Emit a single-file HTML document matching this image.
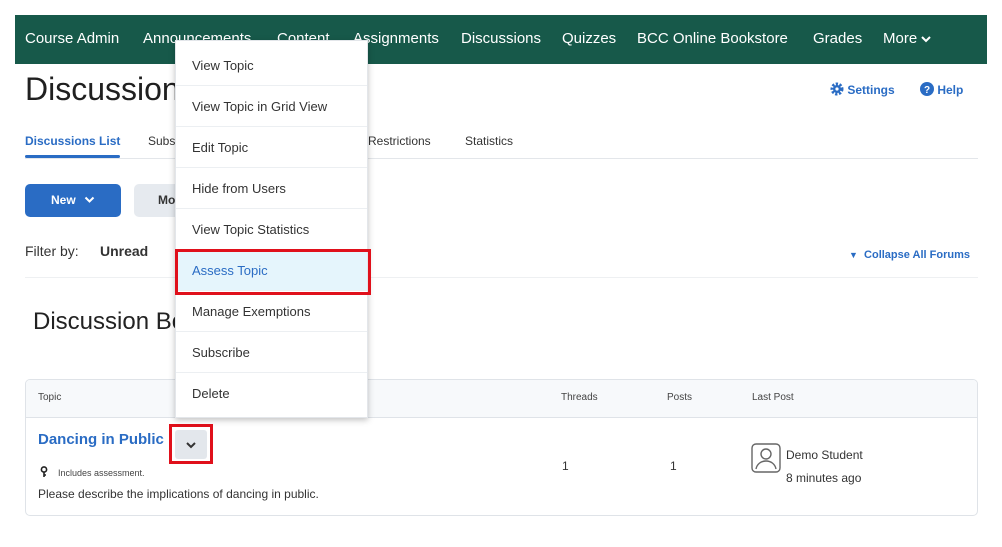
<!DOCTYPE html>
<html><head><style>
*{margin:0;padding:0;box-sizing:border-box}
body{width:1002px;height:547px;background:#fff;font-family:"Liberation Sans",sans-serif;position:relative;overflow:hidden;color:#222}
.a{position:absolute;white-space:nowrap}
.nav{left:15px;top:15px;width:972px;height:49px;background:#17594a}
.nv{color:#fff;font-size:15px;top:30px}
.blue{color:#2a6cc4}
.menu{left:175px;top:40px;width:193px;height:378px;background:#fff;box-shadow:0 2px 6px rgba(0,0,0,.25);border:1px solid #e3e6ea}
.mi{position:absolute;left:0;width:191px;height:41px;border-bottom:1px solid #eceff2;font-size:13px;color:#333;padding-left:16px;line-height:41px}
</style></head><body>
<div class="a nav"></div>
<div class="a nv" style="left:25px">Course Admin</div>
<div class="a nv" style="left:143px">Announcements</div>
<div class="a nv" style="left:277px">Content</div>
<div class="a nv" style="left:353px">Assignments</div>
<div class="a nv" style="left:461px">Discussions</div>
<div class="a nv" style="left:562px">Quizzes</div>
<div class="a nv" style="left:637px">BCC Online Bookstore</div>
<div class="a nv" style="left:813px">Grades</div>
<div class="a nv" style="left:883px">More <svg width="10" height="8" viewBox="0 0 10 8"><path d="M1 2l4 4 4-4" stroke="#fff" stroke-width="2" fill="none"/></svg></div>

<div class="a" style="left:25px;top:71px;font-size:32px;color:#202020">Discussions</div>
<div class="a blue" style="left:830px;top:82px;font-size:12px;font-weight:bold"><svg width="14" height="14" viewBox="0 0 14 14" style="vertical-align:-2px"><circle cx="7" cy="7" r="5" fill="none" stroke="#2a6cc4" stroke-width="3" stroke-dasharray="2.2 1.5"/><circle cx="7" cy="7" r="4" fill="#2a6cc4"/><circle cx="7" cy="7" r="1.6" fill="#fff"/></svg> Settings</div>
<div class="a blue" style="left:920px;top:82px;font-size:12px;font-weight:bold"><svg width="14" height="14" viewBox="0 0 14 14" style="vertical-align:-2px"><circle cx="7" cy="7" r="7" fill="#2a6cc4"/><text x="7" y="11" font-size="10" fill="#fff" text-anchor="middle" font-weight="bold" font-family="Liberation Sans">?</text></svg> Help</div>

<div class="a blue" style="left:25px;top:134px;font-size:12px;font-weight:bold">Discussions List</div>
<div class="a" style="left:25px;top:155px;width:95px;height:3px;background:#2a6cc4;border-radius:2px"></div>
<div class="a" style="left:148px;top:134px;font-size:12px;color:#333">Subs</div>
<div class="a" style="left:368px;top:134px;font-size:12px;color:#333">Restrictions</div>
<div class="a" style="left:465px;top:134px;font-size:12px;color:#333">Statistics</div>
<div class="a" style="left:25px;top:158px;width:953px;height:1px;background:#e3e6ea"></div>

<div class="a" style="left:25px;top:184px;width:96px;height:33px;background:#2a6cc4;border-radius:5px;color:#fff;font-size:12px;font-weight:bold;text-align:center;line-height:33px">New <svg width="11" height="8" viewBox="0 0 11 8" style="margin-left:5px"><path d="M1.5 1.5l4 4 4-4" stroke="#fff" stroke-width="2" fill="none"/></svg></div>
<div class="a" style="left:134px;top:184px;width:60px;height:33px;background:#e6eaef;border-radius:5px;font-size:12px;font-weight:bold;padding-left:24px;line-height:33px;color:#333">Mo</div>

<div class="a" style="left:25px;top:243px;font-size:14px;color:#333">Filter by:</div>
<div class="a" style="left:100px;top:243px;font-size:14px;color:#333;font-weight:bold">Unread</div>
<div class="a blue" style="left:849px;top:249px;font-size:11px;font-weight:bold"><span style="font-size:9px">▼</span>&nbsp; Collapse All Forums</div>
<div class="a" style="left:25px;top:277px;width:953px;height:1px;background:#eef0f2"></div>

<div class="a" style="left:33px;top:308px;font-size:24px;color:#222">Discussion Boards</div>

<div class="a" style="left:25px;top:379px;width:953px;height:137px;border:1px solid #dfe3e8;border-radius:5px;overflow:hidden">
<div style="height:38px;background:#f7f9fb;border-bottom:1px solid #dfe3e8"></div></div>
<div class="a" style="left:38px;top:392px;font-size:10px;color:#444">Topic</div>
<div class="a" style="left:561px;top:392px;font-size:10px;color:#444">Threads</div>
<div class="a" style="left:667px;top:392px;font-size:10px;color:#444">Posts</div>
<div class="a" style="left:752px;top:392px;font-size:10px;color:#444">Last Post</div>

<div class="a blue" style="left:38px;top:431px;font-size:15px;font-weight:bold">Dancing in Public</div>
<div class="a" style="left:169px;top:424px;width:44px;height:40px;border:3px solid #e0101b"></div>
<div class="a" style="left:175px;top:430px;width:32px;height:29px;background:#e3e7ec;border-radius:3px"></div>
<svg class="a" style="left:185px;top:441px" width="12" height="8" viewBox="0 0 12 8"><path d="M2 2l4 4 4-4" stroke="#333" stroke-width="2" fill="none"/></svg>
<svg class="a" style="left:40px;top:466px" width="8" height="12" viewBox="0 0 8 12"><circle cx="4" cy="3.5" r="2.6" fill="none" stroke="#222" stroke-width="1.6"/><path d="M4 6v5M4 9h2" stroke="#222" stroke-width="1.6"/></svg>
<div class="a" style="left:58px;top:468px;font-size:9px;color:#444">Includes assessment.</div>
<div class="a" style="left:38px;top:487px;font-size:12px;color:#333">Please describe the implications of dancing in public.</div>

<div class="a" style="left:562px;top:459px;font-size:12px;color:#333">1</div>
<div class="a" style="left:670px;top:459px;font-size:12px;color:#333">1</div>
<svg class="a" style="left:751px;top:443px" width="30" height="31" viewBox="0 0 30 31"><rect x="1" y="1" width="28" height="28" rx="4" fill="none" stroke="#666" stroke-width="1.4"/><circle cx="15" cy="11" r="5" fill="none" stroke="#666" stroke-width="1.4"/><path d="M5 26c1-5 5-8 10-8s9 3 10 8" fill="none" stroke="#666" stroke-width="1.4"/></svg>
<div class="a" style="left:786px;top:448px;font-size:12px;color:#333">Demo Student</div>
<div class="a" style="left:786px;top:471px;font-size:12px;color:#333">8 minutes ago</div>

<div class="a menu">
<div class="mi" style="top:4px">View Topic</div>
<div class="mi" style="top:45px">View Topic in Grid View</div>
<div class="mi" style="top:86px">Edit Topic</div>
<div class="mi" style="top:127px">Hide from Users</div>
<div class="mi" style="top:168px">View Topic Statistics</div>
<div class="mi" style="top:209px;background:#e5f5fc;color:#2a6cc4">Assess Topic</div>
<div class="mi" style="top:250px">Manage Exemptions</div>
<div class="mi" style="top:291px">Subscribe</div>
<div class="mi" style="top:332px;border:none">Delete</div>
</div>
<div class="a" style="left:175px;top:249px;width:196px;height:46px;border:3px solid #e0101b"></div>
</body></html>
